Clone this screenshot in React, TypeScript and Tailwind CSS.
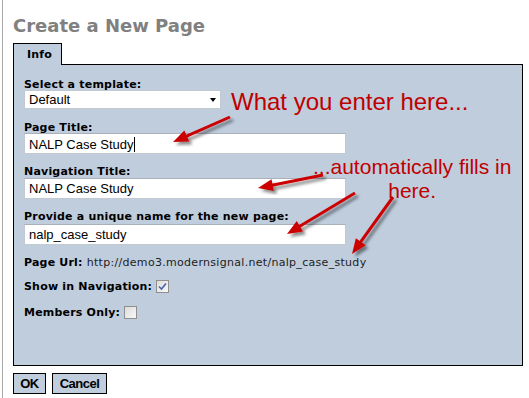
import React from 'react';

const label = "block h-[13px] text-[11px] leading-[13px] font-bold tracking-[0.2px] text-black font-['DejaVu_Sans',sans-serif] whitespace-nowrap";
const field = "block w-[322px] h-[21px] bg-white border border-[#c3c9d1] border-t-[#a9b0ba] pl-[4px] text-[13px] leading-[19px] text-black font-['Liberation_Sans',Arial,sans-serif]";

type Arrow = { x1: number; y1: number; x2: number; y2: number };

const arrows: Arrow[] = [
  { x1: 230, y1: 117, x2: 173, y2: 142 },
  { x1: 323, y1: 175, x2: 258, y2: 188 },
  { x1: 355, y1: 193, x2: 287, y2: 234 },
  { x1: 393, y1: 197, x2: 352, y2: 254 },
];

function arrowParts({ x1, y1, x2, y2 }: Arrow) {
  const dx = x2 - x1;
  const dy = y2 - y1;
  const len = Math.sqrt(dx * dx + dy * dy);
  const ux = dx / len;
  const uy = dy / len;
  const head = 15;
  const half = 6;
  const bx = x2 - ux * head;
  const by = y2 - uy * head;
  const px = -uy * half;
  const py = ux * half;
  return {
    line: { x1, y1, x2: bx + ux * 2, y2: by + uy * 2 },
    points: `${x2},${y2} ${bx + px},${by + py} ${bx - px},${by - py}`,
  };
}

const Checkbox: React.FC<{ checked?: boolean }> = ({ checked }) => (
  <span className="ml-[4px] flex h-[13px] w-[13px] items-center justify-center border border-[#8e8f8f] bg-gradient-to-br from-[#dcdcdc] to-[#f8f8f8]">
    {checked && (
      <svg width="9" height="9" viewBox="0 0 9 9">
        <path d="M1 4.5 L3.5 7 L8 1.5" fill="none" stroke="#4a63ad" strokeWidth="1.6" />
      </svg>
    )}
  </span>
);

export default function App() {
  return (
    <div className="relative h-[398px] w-[529px] overflow-hidden bg-white">
      <div className="ml-[2px] h-full border-l border-[#a9a9a9] pl-[10px] pt-[16px]">
        <h1 className="h-[19px] text-[18px] leading-[20px] font-bold text-[#808080] font-['DejaVu_Sans',sans-serif] whitespace-nowrap">
          Create a New Page
        </h1>

        <div className="relative z-10 mt-[8px] -mb-px h-[22px] w-[49px] border border-b-0 border-black bg-[#bfcddd] pl-[13px] pt-[4px]">
          <span className={label}>Info</span>
        </div>

        <div className="h-[302px] w-[510px] border border-black bg-[#bfcddd] pl-[10px] pt-[13px]">
          <span className={label}>Select a template:</span>
          <div className="relative mt-[-1px] h-[19px] w-[197px] border border-[#c3c9d1] bg-white pl-[4px] text-[13px] leading-[17px] font-['Liberation_Sans',Arial,sans-serif]">
            Default
            <span className="absolute right-[4px] top-[7px] h-0 w-0 border-x-[3.5px] border-t-[4px] border-x-transparent border-t-black" />
          </div>

          <span className={`${label} mt-[12px]`}>Page Title:</span>
          <div className={`${field} mt-[-1px]`}>
            NALP Case Study<span className="inline-block h-[15px] w-px translate-y-[3px] bg-black" />
          </div>

          <span className={`${label} mt-[11px]`}>Navigation Title:</span>
          <div className={field}>NALP Case Study</div>

          <span className={`${label} mt-[11px]`}>Provide a unique name for the new page:</span>
          <div className={`${field} mt-[1px]`}>nalp_case_study</div>

          <div className={`${label} mt-[11px]`}>
            Page Url: <span className="font-normal tracking-[0.3px] text-[#222]">http://demo3.modernsignal.net/nalp_case_study</span>
          </div>

          <div className={`${label} mt-[11px] flex items-center`}>
            Show in Navigation: <Checkbox checked />
          </div>

          <div className={`${label} mt-[13px] flex items-center`}>
            Members Only: <Checkbox />
          </div>
        </div>

        <div className="mt-[7px] flex gap-[6px]">
          <button className="h-[21px] w-[33px] border border-black bg-[#bfcddd] text-[13px] leading-[19px] font-bold tracking-[-0.5px] text-black font-['Liberation_Sans',Arial,sans-serif]">
            OK
          </button>
          <button className="h-[21px] w-[55px] border border-black bg-[#bfcddd] text-[13px] leading-[19px] font-bold tracking-[-0.5px] text-black font-['Liberation_Sans',Arial,sans-serif]">
            Cancel
          </button>
        </div>
      </div>

      <svg className="pointer-events-none absolute inset-0" width="529" height="398">
        <defs>
          <filter id="sh" x="-20%" y="-20%" width="140%" height="140%">
            <feDropShadow dx="3" dy="3" stdDeviation="1.8" floodColor="#000" floodOpacity="0.45" />
          </filter>
        </defs>
        {arrows.map((a, i) => {
          const p = arrowParts(a);
          return (
            <g key={i} filter="url(#sh)">
              <line {...p.line} stroke="#cc0000" strokeWidth="3" />
              <polygon points={p.points} fill="#cc0000" />
            </g>
          );
        })}
      </svg>

      <div className="pointer-events-none absolute left-[231px] top-[90px] text-[24px] leading-none text-[#c00000] font-['Liberation_Sans',Arial,sans-serif] whitespace-nowrap">
        What you enter here...
      </div>
      <div className="pointer-events-none absolute left-[313px] top-[155px] text-[21px] leading-[24px] text-center text-[#c00000] font-['Liberation_Sans',Arial,sans-serif] whitespace-nowrap">
        ...automatically fills in
        <br />
        here.
      </div>
    </div>
  );
}
